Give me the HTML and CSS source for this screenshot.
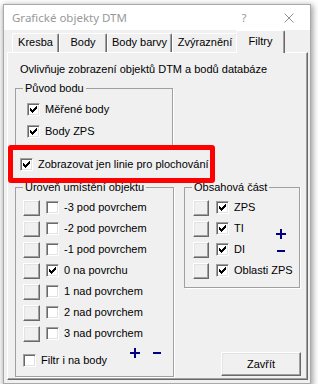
FILE: index.html
```html
<!DOCTYPE html>
<html lang="cs">
<head>
<meta charset="utf-8">
<title>Grafické objekty DTM</title>
<link rel="stylesheet" href="styles.css">
</head>
<body>
<div class="window">
  <div class="titlebar">
    <span class="title">Grafické objekty DTM</span>
    <span class="help">?</span>
    <svg class="close-x" width="10" height="10" viewBox="0 0 10 10"><path d="M0.5 0.5L9.5 9.5M9.5 0.5L0.5 9.5"/></svg>
  </div>
  <div class="client">
    <div class="tabs">
      <div class="tab w-kresba">Kresba</div>
      <div class="tab w-body">Body</div>
      <div class="tab w-barvy">Body barvy</div>
      <div class="tab w-zvyr">Zvýraznění</div>
      <div class="tab active w-filtry">Filtry</div>
    </div>
    <div class="panel">
      <p class="intro">Ovlivňuje zobrazení objektů DTM a bodů databáze</p>

      <fieldset class="group origin">
        <legend>Původ bodu</legend>
        <div class="origin-rows">
          <label class="check row22"><span class="box"><svg class="tick" width="7" height="7" viewBox="0 0 7 7"><path d="M0 2H1V3H2V4H3V3H4V2H5V1H6V0H7V3H6V4H5V5H4V6H3V7H2V6H1V5H0Z"/></svg></span><span>Měřené body</span></label>
          <label class="check row22"><span class="box"><svg class="tick" width="7" height="7" viewBox="0 0 7 7"><path d="M0 2H1V3H2V4H3V3H4V2H5V1H6V0H7V3H6V4H5V5H4V6H3V7H2V6H1V5H0Z"/></svg></span><span>Body ZPS</span></label>
        </div>
      </fieldset>

      <div class="highlight">
        <label class="check"><span class="box"><svg class="tick" width="7" height="7" viewBox="0 0 7 7"><path d="M0 2H1V3H2V4H3V3H4V2H5V1H6V0H7V3H6V4H5V5H4V6H3V7H2V6H1V5H0Z"/></svg></span><span>Zobrazovat jen linie pro plochování</span></label>
      </div>

      <div class="groups">
        <fieldset class="group level">
          <legend>Úroveň umístění objektu</legend>
          <div class="level-rows">
            <div class="lrow"><span class="sq"></span><label class="check"><span class="box"></span><span>-3 pod povrchem</span></label></div>
            <div class="lrow"><span class="sq"></span><label class="check"><span class="box"></span><span>-2 pod povrchem</span></label></div>
            <div class="lrow"><span class="sq"></span><label class="check"><span class="box"></span><span>-1 pod povrchem</span></label></div>
            <div class="lrow"><span class="sq"></span><label class="check"><span class="box"><svg class="tick" width="7" height="7" viewBox="0 0 7 7"><path d="M0 2H1V3H2V4H3V3H4V2H5V1H6V0H7V3H6V4H5V5H4V6H3V7H2V6H1V5H0Z"/></svg></span><span>0 na povrchu</span></label></div>
            <div class="lrow"><span class="sq"></span><label class="check"><span class="box"></span><span>1 nad povrchem</span></label></div>
            <div class="lrow"><span class="sq"></span><label class="check"><span class="box"></span><span>2 nad povrchem</span></label></div>
            <div class="lrow"><span class="sq"></span><label class="check"><span class="box"></span><span>3 nad povrchem</span></label></div>
          </div>
          <div class="level-foot">
            <label class="check foot-check"><span class="box"></span><span>Filtr i na body</span></label>
            <div class="pm-row">
              <span class="pm"><svg width="10" height="10" viewBox="0 0 10 10"><path d="M4 0H6V4H10V6H6V10H4V6H0V4H4Z"/></svg></span>
              <span class="pm"><svg width="8" height="2" viewBox="0 0 8 2"><rect width="8" height="2"/></svg></span>
            </div>
          </div>
        </fieldset>

        <div class="side">
          <fieldset class="group content">
            <legend>Obsahová část</legend>
            <div class="content-grid">
              <div class="pm-col">
                <span class="pm"><svg width="10" height="10" viewBox="0 0 10 10"><path d="M4 0H6V4H10V6H6V10H4V6H0V4H4Z"/></svg></span>
                <span class="pm"><svg width="8" height="2" viewBox="0 0 8 2"><rect width="8" height="2"/></svg></span>
              </div>
              <span class="sq"></span><label class="check span2"><span class="box"><svg class="tick" width="7" height="7" viewBox="0 0 7 7"><path d="M0 2H1V3H2V4H3V3H4V2H5V1H6V0H7V3H6V4H5V5H4V6H3V7H2V6H1V5H0Z"/></svg></span><span>ZPS</span></label>
              <span class="sq"></span><label class="check"><span class="box"><svg class="tick" width="7" height="7" viewBox="0 0 7 7"><path d="M0 2H1V3H2V4H3V3H4V2H5V1H6V0H7V3H6V4H5V5H4V6H3V7H2V6H1V5H0Z"/></svg></span><span>TI</span></label>
              <span class="sq"></span><label class="check"><span class="box"><svg class="tick" width="7" height="7" viewBox="0 0 7 7"><path d="M0 2H1V3H2V4H3V3H4V2H5V1H6V0H7V3H6V4H5V5H4V6H3V7H2V6H1V5H0Z"/></svg></span><span>DI</span></label>
              <span class="sq"></span><label class="check span2"><span class="box"><svg class="tick" width="7" height="7" viewBox="0 0 7 7"><path d="M0 2H1V3H2V4H3V3H4V2H5V1H6V0H7V3H6V4H5V5H4V6H3V7H2V6H1V5H0Z"/></svg></span><span>Oblasti ZPS</span></label>
            </div>
          </fieldset>
          <button class="btn close-btn" type="button">Zavřít</button>
        </div>
      </div>
    </div>
  </div>
</div>
</body>
</html>
```
FILE: styles.css
```css
* { box-sizing: border-box; }

body {
  margin: 0;
  background: #ffffff;
  font-family: "Liberation Sans", Arial, sans-serif;
  font-size: 11px;
  color: #000;
}

.window {
  margin: 4px 0 0 3px;
  width: 308px;
  height: 380px;
  border: 1px solid #a9a9a9;
  background: #f0f0f0;
  box-shadow: 1px 2px 6px 1px rgba(0, 0, 0, 0.38);
  display: flex;
  flex-direction: column;
}

.titlebar {
  height: 25px;
  flex: none;
  background: #ffffff;
  display: flex;
  align-items: center;
  padding-left: 8px;
  font-family: "Noto Sans", "Open Sans", sans-serif;
  font-size: 11.5px;
  color: #999999;
}

.help {
  margin-left: auto;
  width: 12px;
  text-align: center;
}

.close-x {
  margin-left: 34px;
  margin-right: 16px;
  stroke: #8f8f8f;
  stroke-width: 1;
  fill: none;
}

.client {
  flex: 1;
  display: flex;
  flex-direction: column;
  padding: 0 2px 3px 3px;
}

.tabs {
  height: 22px;
  flex: none;
  display: flex;
  align-items: flex-end;
  padding-left: 5px;
}

.tab {
  height: 19px;
  line-height: 17px;
  text-align: center;
  border: 1px solid;
  border-color: #ffffff #696969 transparent #ffffff;
  border-bottom: 0;
  border-radius: 2px 2px 0 0;
  box-shadow: inset -1px 0 0 #a0a0a0;
  background: #f0f0f0;
}

.w-kresba { width: 47px; }
.w-body { width: 48px; }
.w-barvy { width: 65px; }
.w-zvyr { width: 66px; }
.w-filtry { width: 49px; }

.tab.active {
  height: 23px;
  margin: 0 -2px -1px -2px;
  padding-top: 1px;
  line-height: 19px;
  position: relative;
  z-index: 2;
}

.panel {
  flex: 1;
  border: 1px solid;
  border-color: #ffffff #696969 #696969 #ffffff;
  box-shadow: inset -1px -1px 0 #a0a0a0;
  background: #f0f0f0;
  display: flex;
  flex-direction: column;
  position: relative;
  z-index: 1;
}

.intro {
  margin: 10px 0 0 12px;
  line-height: 13px;
}

.group {
  margin: 0;
  padding: 0;
  border: 1px solid #a0a0a0;
  box-shadow: 1px 1px 0 #ffffff;
  min-width: 0;
}

.group legend {
  margin-left: 7px;
  padding: 0 2px;
  line-height: 13px;
  font-size: 11px;
}

.origin {
  margin: 6px 0 0 7px;
  width: 158px;
}

.origin-rows {
  padding: 3px 0 4px 11px;
}

.check {
  display: flex;
  align-items: center;
  line-height: 13px;
  white-space: nowrap;
}

.row22 { height: 22px; }

.box {
  width: 13px;
  height: 13px;
  flex: none;
  margin-right: 5px;
  border: 1px solid;
  border-color: #a0a0a0 #ffffff #ffffff #a0a0a0;
  box-shadow: inset 1px 1px 0 #696969, inset -1px -1px 0 #e3e3e3;
  background: #ffffff;
  display: flex;
  align-items: center;
  justify-content: center;
}

.tick { fill: #000; display: block; }

.highlight {
  margin-top: -2px;
  width: 207px;
  height: 38px;
  border: 5px solid #ff0000;
  border-radius: 3px;
  display: flex;
  align-items: center;
  padding-left: 7px;
  position: relative;
}

.groups {
  display: flex;
  gap: 10px;
  margin-top: -2px;
  padding-left: 7px;
}

.level {
  width: 159px;
  height: 196px;
}

.level-rows {
  padding: 3px 0 0 7px;
}

.lrow {
  height: 21px;
  display: flex;
  align-items: center;
}

.sq {
  width: 17px;
  height: 16px;
  flex: none;
  margin-right: 6px;
  border: 1px solid;
  border-color: #ffffff #696969 #696969 #ffffff;
  box-shadow: inset -1px -1px 0 #a0a0a0, inset 1px 1px 0 #e3e3e3;
  background: #f0f0f0;
}

.level-foot {
  display: flex;
  height: 26px;
  padding: 0 10px 3px 7px;
}

.foot-check { align-self: flex-end; }

.pm-row {
  margin-left: auto;
  display: flex;
  gap: 10px;
  align-self: flex-start;
}

.pm {
  width: 12px;
  height: 18px;
  display: flex;
  align-items: center;
  justify-content: center;
  fill: #000080;
}

.pm svg { display: block; }

.side {
  width: 117px;
  display: flex;
  flex-direction: column;
}

.content {
  width: 116px;
  height: 107px;
}

.content-grid {
  display: grid;
  grid-template-columns: 16px 1fr 12px;
  grid-auto-rows: 21px;
  column-gap: 7px;
  align-items: center;
  padding: 3px 12px 0 8px;
}

.content-grid .sq { width: 16px; margin-right: 0; }

.span2 { grid-column: 2 / 4; }

.pm-col {
  grid-column: 3;
  grid-row: 2 / 4;
  align-self: start;
  margin-top: 7px;
  display: flex;
  flex-direction: column;
}

.pm-col .pm { height: 17px; }

.btn {
  font-family: "Liberation Sans", Arial, sans-serif;
  font-size: 11px;
  color: #000;
  border: 1px solid;
  border-color: #ffffff #696969 #696969 #ffffff;
  box-shadow: inset -1px -1px 0 #a0a0a0, inset 1px 1px 0 #e3e3e3;
  background: #f0f0f0;
  padding: 0;
}

.close-btn {
  margin: auto 0 1px 37px;
  width: 80px;
  height: 24px;
}
```
